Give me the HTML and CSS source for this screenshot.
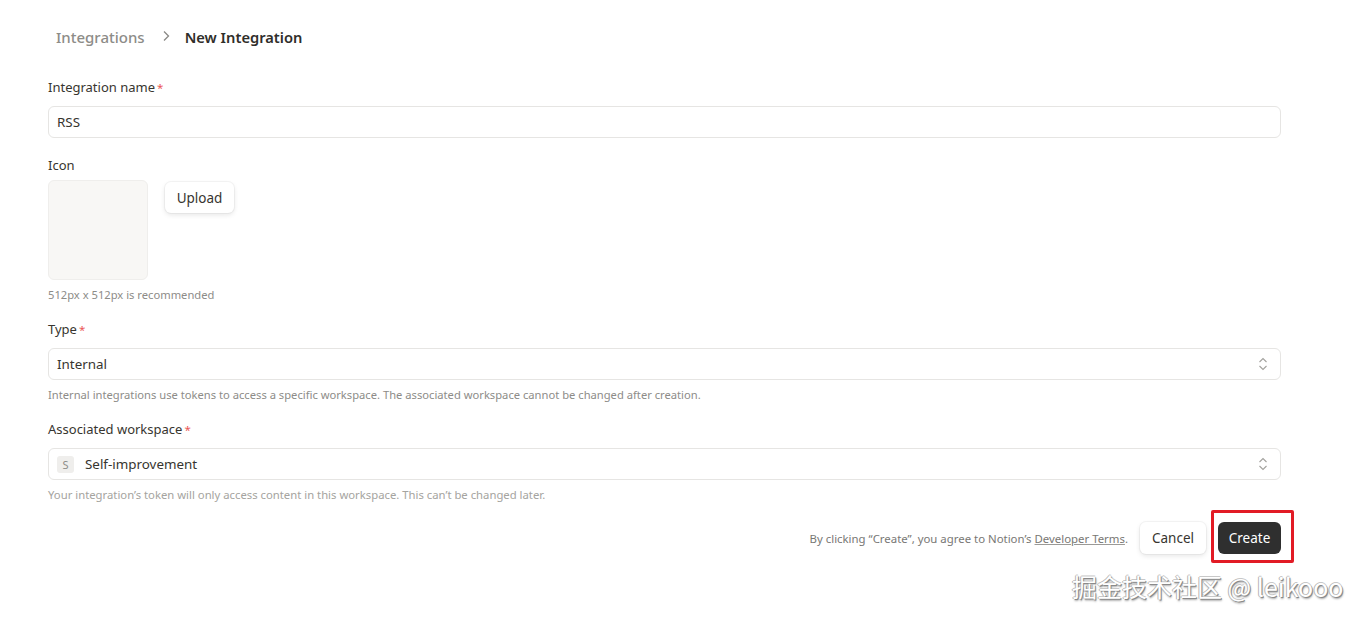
FILE: index.html
```html
<!DOCTYPE html>
<html>
<head>
<meta charset="utf-8">
<link rel="stylesheet" href="styles.css">
</head>
<body>
<div class="page">
  <nav class="crumbs">
    <span class="crumb-muted">Integrations</span>
    <svg class="crumb-sep" width="10" height="12" viewBox="0 0 10 12"><path d="M3 1.5 L7.5 6 L3 10.5" fill="none" stroke="#8a8985" stroke-width="1.3"/></svg>
    <span class="crumb-current">New Integration</span>
  </nav>

  <form class="form">
    <div class="field">
      <div class="label">Integration name<span class="req">*</span></div>
      <div class="input">RSS</div>
    </div>

    <div class="field field-icon">
      <div class="label">Icon</div>
      <div class="icon-row">
        <div class="icon-box"></div>
        <div class="btn btn-light btn-upload">Upload</div>
      </div>
      <div class="help">512px x 512px is recommended</div>
    </div>

    <div class="field field-type">
      <div class="label">Type<span class="req">*</span></div>
      <div class="input select">
        <span>Internal</span>
        <svg class="updown" width="10" height="14" viewBox="0 0 10 14"><path d="M1.5 5 L5 1.5 L8.5 5 M1.5 9 L5 12.5 L8.5 9" fill="none" stroke="#a3a29e" stroke-width="1.1"/></svg>
      </div>
      <div class="help">Internal integrations use tokens to access a specific workspace. The associated workspace cannot be changed after creation.</div>
    </div>

    <div class="field">
      <div class="label">Associated workspace<span class="req">*</span></div>
      <div class="input select">
        <span class="ws"><span class="ws-badge">S</span>Self-improvement</span>
        <svg class="updown" width="10" height="14" viewBox="0 0 10 14"><path d="M1.5 5 L5 1.5 L8.5 5 M1.5 9 L5 12.5 L8.5 9" fill="none" stroke="#a3a29e" stroke-width="1.1"/></svg>
      </div>
      <div class="help help-light">Your integration’s token will only access content in this workspace. This can’t be changed later.</div>
    </div>

    <div class="footer">
      <span class="terms">By clicking “Create”, you agree to Notion’s <u>Developer Terms</u>.</span>
      <div class="btn btn-light">Cancel</div>
      <div class="create-wrap">
        <div class="btn btn-dark">Create</div>
        <div class="highlight"></div>
      </div>
    </div>
  </form>

  <div class="watermark">掘金技术社区 @ leikooo</div>
</div>
</body>
</html>
```

FILE: styles.css
```css
* { box-sizing: border-box; }
html, body { margin: 0; padding: 0; background: #fff; }
body {
  font-family: "Noto Sans", "Open Sans", sans-serif;
  color: #37352f;
  width: 1362px;
  height: 619px;
  overflow: hidden;
}
.page {
  position: relative;
  width: 1362px;
  height: 619px;
  padding: 25px 0 0 48px;
}
.crumbs {
  display: flex;
  align-items: center;
  height: 24px;
  padding-left: 8px;
  font-size: 15px;
  line-height: 24px;
}
.crumb-muted { color: #8d8c88; font-weight: 500; }
.crumb-sep { margin: 0 14px 2px 16px; }
.crumb-current { color: #2f2e2a; font-weight: 600; font-size: 14.7px; }

.form {
  width: 1233px;
  margin-top: 28px;
  display: flex;
  flex-direction: column;
}
.field { display: flex; flex-direction: column; margin-bottom: 17px; }
.field-icon { margin-bottom: 16px; }
.field-type { margin-bottom: 16px; }
.label {
  font-size: 13px;
  line-height: 20px;
  height: 20px;
  color: #37352f;
  margin-bottom: 9px;
}
.field-icon .label { margin-bottom: 5px; }
.req { color: #eb5757; margin-left: 2px; font-size: 11.5px; }
.input {
  height: 32px;
  border: 1px solid #e6e5e3;
  border-radius: 6px;
  padding: 0 8px;
  display: flex;
  align-items: center;
  font-size: 13.4px;
  color: #37352f;
}
.select { justify-content: space-between; padding-right: 12px; }
.updown { display: block; }
.ws { display: flex; align-items: center; }
.ws-badge {
  width: 17px;
  height: 17px;
  border-radius: 3px;
  background: #efeeec;
  color: #8d8c88;
  font-size: 11px;
  display: flex;
  align-items: center;
  justify-content: center;
  margin-right: 11px;
}
.icon-row { display: flex; align-items: flex-start; gap: 17px; }
.icon-box {
  width: 100px;
  height: 100px;
  background: #f8f7f5;
  border: 1px solid #efeeec;
  border-radius: 6px;
}
.help {
  font-size: 11.2px;
  line-height: 16px;
  color: #8d8c88;
  margin-top: 7px;
}
.help-light { color: #a5a4a0; font-size: 11.3px; }

.btn {
  height: 32px;
  border-radius: 6px;
  font-size: 13.5px;
  display: flex;
  align-items: center;
  justify-content: center;
  padding: 0 12px;
}
.btn-light {
  background: #fff;
  color: #37352f;
  box-shadow: 0 0 0 1px rgba(15,15,15,0.04), 0 2px 5px rgba(15,15,15,0.1);
}
.btn-upload { margin-top: 2px; width: 69px; height: 31px; }
.btn-dark { background: #2f2f2f; color: #fff; width: 63px; }

.footer {
  display: flex;
  align-items: center;
  justify-content: flex-end;
  margin-top: 2px;
}
.terms { font-size: 11.4px; color: #787774; margin-right: 12px; }
.terms u { text-decoration-color: #9b9a97; }
.footer .btn-light { width: 66px; margin-right: 12px; }
.create-wrap { position: relative; }
.highlight {
  position: absolute;
  left: -7px;
  top: -12px;
  width: 83px;
  height: 53px;
  border: 3px solid #e21b25;
  border-radius: 2px;
  pointer-events: none;
}
.watermark {
  position: absolute;
  left: 1072px;
  top: 569px;
  font-family: "Noto Sans CJK SC", "Noto Sans", sans-serif;
  font-size: 25px;
  line-height: 34px;
  color: #fff;
  text-shadow: 1px 1px 0 #8a8a8a, -1px 0 0 #b5b5b5, 0 -1px 0 #c8c8c8, 1px 2px 2px rgba(0,0,0,0.35);
  white-space: nowrap;
}
```
